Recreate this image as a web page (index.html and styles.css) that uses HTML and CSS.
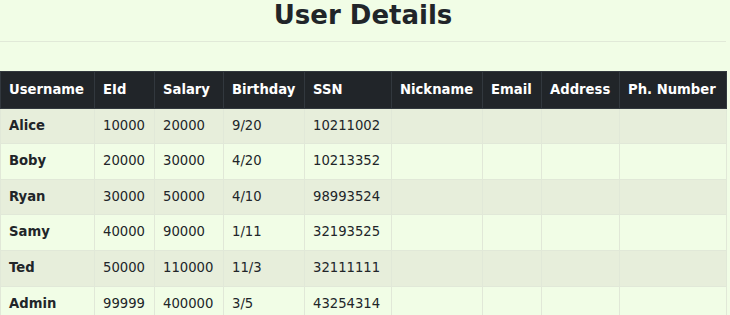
FILE: index.html
```html
<!DOCTYPE html>
<html lang="en">
<head>
    <meta charset="UTF-8">
    <meta name="viewport" content="width=device-width, initial-scale=1.0">
    <title>User Details</title>
    <link rel="stylesheet" href="styles.css">
</head>
<body>
    <div class="container">
        <h1>User Details</h1>
        <hr>

        <table class="user-table">
            <colgroup>
                <col class="col-name">
                <col class="col-eid">
                <col class="col-salary">
                <col class="col-birthday">
                <col class="col-ssn">
                <col class="col-nickname">
                <col class="col-email">
                <col class="col-address">
                <col class="col-phone">
            </colgroup>
            <thead>
                <tr>
                    <th>Username</th>
                    <th>EId</th>
                    <th>Salary</th>
                    <th>Birthday</th>
                    <th>SSN</th>
                    <th>Nickname</th>
                    <th>Email</th>
                    <th>Address</th>
                    <th>Ph. Number</th>
                </tr>
            </thead>
            <tbody>
                <tr>
                    <th>Alice</th><td>10000</td><td>20000</td><td>9/20</td><td>10211002</td><td></td><td></td><td></td><td></td>
                </tr>
                <tr>
                    <th>Boby</th><td>20000</td><td>30000</td><td>4/20</td><td>10213352</td><td></td><td></td><td></td><td></td>
                </tr>
                <tr>
                    <th>Ryan</th><td>30000</td><td>50000</td><td>4/10</td><td>98993524</td><td></td><td></td><td></td><td></td>
                </tr>
                <tr>
                    <th>Samy</th><td>40000</td><td>90000</td><td>1/11</td><td>32193525</td><td></td><td></td><td></td><td></td>
                </tr>
                <tr>
                    <th>Ted</th><td>50000</td><td>110000</td><td>11/3</td><td>32111111</td><td></td><td></td><td></td><td></td>
                </tr>
                <tr>
                    <th>Admin</th><td>99999</td><td>400000</td><td>3/5</td><td>43254314</td><td></td><td></td><td></td><td></td>
                </tr>
            </tbody>
        </table>
    </div>
</body>
</html>
```

FILE: styles.css
```css
body {
    margin: 0;
    font-family: "DejaVu Sans", sans-serif;
    background-color: #f1fde6;
    color: #212529;
}
.container {
    width: 726px;
}
h1 {
    margin: 0;
    font-size: 26px;
    line-height: 31px;
    text-align: center;
}
hr {
    margin: 10px 0 29px;
    border: 0;
    border-top: 1px solid #e1e9d8;
}
.user-table {
    width: 726px;
    table-layout: fixed;
    border-collapse: collapse;
    font-size: 13.2px;
    line-height: 18.6px;
}
.user-table th,
.user-table td {
    padding: 8px;
    text-align: left;
    border: 1px solid #e1e8d8;
    white-space: nowrap;
}
.user-table thead th {
    padding: 8.5px 8px;
    background-color: #212529;
    color: white;
    border-color: #32383e;
}
.user-table tbody tr:nth-child(odd) {
    background-color: #e7eedb;
}
.col-name { width: 94px; }
.col-eid { width: 60px; }
.col-salary { width: 69px; }
.col-birthday { width: 81px; }
.col-ssn { width: 87px; }
.col-nickname { width: 91px; }
.col-email { width: 59px; }
.col-address { width: 78px; }
.col-phone { width: 107px; }
```
